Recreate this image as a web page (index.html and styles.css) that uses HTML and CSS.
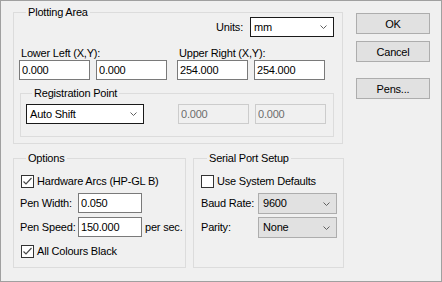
FILE: index.html
```html
<!DOCTYPE html>
<html lang="en">
<head>
  <meta charset="UTF-8">
  <title>Plotter Setup</title>
  <link rel="stylesheet" href="styles.css">
</head>
<body>
  <div class="dialog">
    <div class="main">
      <div class="group plotting">
        <div class="group-head">
          <span class="group-title">Plotting Area</span>
          <div class="units">
            <span>Units:</span>
            <div class="combo combo-white units-combo">
              <span>mm</span>
              <svg class="chev" width="7" height="4" viewBox="0 0 7 4"><polyline points="0.5,0.5 3.5,3.5 6.5,0.5" /></svg>
            </div>
          </div>
        </div>

        <div class="coords">
          <div class="coord">
            <div class="coord-label">Lower Left (X,Y):</div>
            <div class="pair">
              <input class="text" type="text" value="0.000">
              <input class="text" type="text" value="0.000">
            </div>
          </div>
          <div class="coord">
            <div class="coord-label">Upper Right (X,Y):</div>
            <div class="pair">
              <input class="text" type="text" value="254.000">
              <input class="text" type="text" value="254.000">
            </div>
          </div>
        </div>

        <div class="group registration">
          <div class="group-head">
            <span class="group-title">Registration Point</span>
          </div>
          <div class="reg-row">
            <div class="combo combo-white reg-combo">
              <span>Auto Shift</span>
              <svg class="chev" width="7" height="4" viewBox="0 0 7 4"><polyline points="0.5,0.5 3.5,3.5 6.5,0.5" /></svg>
            </div>
            <div class="pair">
              <input class="text" type="text" value="0.000" disabled>
              <input class="text" type="text" value="0.000" disabled>
            </div>
          </div>
        </div>
      </div>

      <div class="lower">
        <div class="group options">
          <div class="group-head">
            <span class="group-title">Options</span>
          </div>
          <div class="check-row">
            <span class="check"><svg width="11" height="11" viewBox="0 0 11 11"><polyline points="1.5,5.5 4,8 9.5,2" /></svg></span>
            <span>Hardware Arcs (HP-GL B)</span>
          </div>
          <div class="field-row first">
            <span class="field-label">Pen Width:</span>
            <input class="text pen-input" type="text" value="0.050">
          </div>
          <div class="field-row">
            <span class="field-label">Pen Speed:</span>
            <input class="text pen-input" type="text" value="150.000">
            <span class="unit">per sec.</span>
          </div>
          <div class="check-row last">
            <span class="check"><svg width="11" height="11" viewBox="0 0 11 11"><polyline points="1.5,5.5 4,8 9.5,2" /></svg></span>
            <span>All Colours Black</span>
          </div>
        </div>

        <div class="group serial">
          <div class="group-head">
            <span class="group-title">Serial Port Setup</span>
          </div>
          <div class="check-row">
            <span class="check"></span>
            <span>Use System Defaults</span>
          </div>
          <div class="field-row first">
            <span class="field-label serial-label">Baud Rate:</span>
            <div class="combo combo-gray serial-combo">
              <span>9600</span>
              <svg class="chev" width="7" height="4" viewBox="0 0 7 4"><polyline points="0.5,0.5 3.5,3.5 6.5,0.5" /></svg>
            </div>
          </div>
          <div class="field-row tight">
            <span class="field-label serial-label">Parity:</span>
            <div class="combo combo-gray serial-combo">
              <span>None</span>
              <svg class="chev" width="7" height="4" viewBox="0 0 7 4"><polyline points="0.5,0.5 3.5,3.5 6.5,0.5" /></svg>
            </div>
          </div>
        </div>
      </div>
    </div>

    <div class="buttons">
      <button class="btn">OK</button>
      <button class="btn">Cancel</button>
      <button class="btn pens">Pens...</button>
    </div>
  </div>
</body>
</html>
```

FILE: styles.css
```css
body {
  margin: 0;
  font-family: "Liberation Sans", Arial, sans-serif;
  font-size: 11px;
  letter-spacing: -0.2px;
  color: #000000;
  background: #f0f0f0;
}
.dialog {
  width: 442px;
  height: 282px;
  box-sizing: border-box;
  border: 1px solid #a0a0a0;
  background: #f0f0f0;
  display: flex;
  align-items: flex-start;
  padding: 11px 0 0 12px;
}
.main {
  width: 331px;
  flex-shrink: 0;
}
.group {
  border: 1px solid #dcdcdc;
  line-height: 13px;
}
.group-head {
  display: flex;
  justify-content: space-between;
  align-items: flex-start;
  margin-top: -7px;
}
.group-title {
  background: #f0f0f0;
  padding: 0 2px;
  margin-left: 6px;
  line-height: 13px;
}
.plotting {
  margin-right: 1px;
  padding: 0 8px 6px 6px;
}
.units {
  display: flex;
  align-items: center;
  gap: 7px;
  margin-top: 11px;
}
.combo {
  box-sizing: border-box;
  height: 20px;
  display: flex;
  align-items: center;
  justify-content: space-between;
  padding: 0 6px 0 3px;
}
.combo-white {
  background: #ffffff;
  border: 1px solid #1a1a1a;
}
.combo-gray {
  background: #e1e1e1;
  border: 1px solid #adadad;
  height: 21px;
  padding-left: 4px;
}
.chev polyline {
  fill: none;
  stroke: #606060;
  stroke-width: 1;
}
.units-combo {
  width: 84px;
}
.coords {
  display: flex;
  gap: 10px;
  margin-top: 10px;
  margin-left: -1px;
}
.coord-label {
  margin-left: 2px;
}
.pair {
  display: flex;
  gap: 6px;
}
.text {
  box-sizing: border-box;
  width: 71px;
  height: 20px;
  margin: 0;
  padding: 0 2px;
  border: 1px solid #7a7a7a;
  background: #ffffff;
  font: inherit;
  letter-spacing: inherit;
  color: #000000;
  outline: none;
}
.text:disabled {
  background: #f0f0f0;
  border-color: #cccccc;
  color: #6d6d6d;
}
.registration {
  margin-top: 13px;
  padding: 0 6px 12px 5px;
}
.reg-row {
  display: flex;
  margin-top: 4px;
}
.reg-combo {
  width: 118px;
  margin-right: 34px;
}
.lower {
  display: grid;
  grid-template-columns: 173px 151px;
  gap: 7px;
  margin-top: 14px;
}
.options {
  padding: 0 0 9px 6px;
}
.serial {
  padding: 0 6px 9px 7px;
}
.check-row {
  display: flex;
  align-items: center;
  gap: 3px;
  margin-top: 10px;
  margin-left: 1px;
}
.serial .check-row {
  margin-left: 0;
}
.check-row.last {
  margin-top: 8px;
}
.check {
  box-sizing: border-box;
  width: 13px;
  height: 13px;
  border: 1px solid #333333;
  background: #ffffff;
  display: flex;
}
.check polyline {
  fill: none;
  stroke: #4a4a4a;
  stroke-width: 1.2;
}
.field-row {
  display: flex;
  align-items: center;
  margin-top: 4px;
}
.field-row.first {
  margin-top: 5px;
}
.field-row.tight {
  margin-top: 3px;
}
.field-label {
  width: 58px;
  flex-shrink: 0;
}
.serial-label {
  width: 57px;
}
.pen-input {
  width: 64px;
}
.unit {
  margin-left: 3px;
}
.serial-combo {
  width: 79px;
}
.buttons {
  display: flex;
  flex-direction: column;
  margin: 1px 0 0 12px;
}
.btn {
  box-sizing: border-box;
  width: 74px;
  height: 21px;
  margin: 0 0 7px 0;
  padding: 0;
  background: #e1e1e1;
  border: 1px solid #adadad;
  font: inherit;
  letter-spacing: inherit;
  color: #000000;
}
.btn.pens {
  margin-top: 9px;
}
```
